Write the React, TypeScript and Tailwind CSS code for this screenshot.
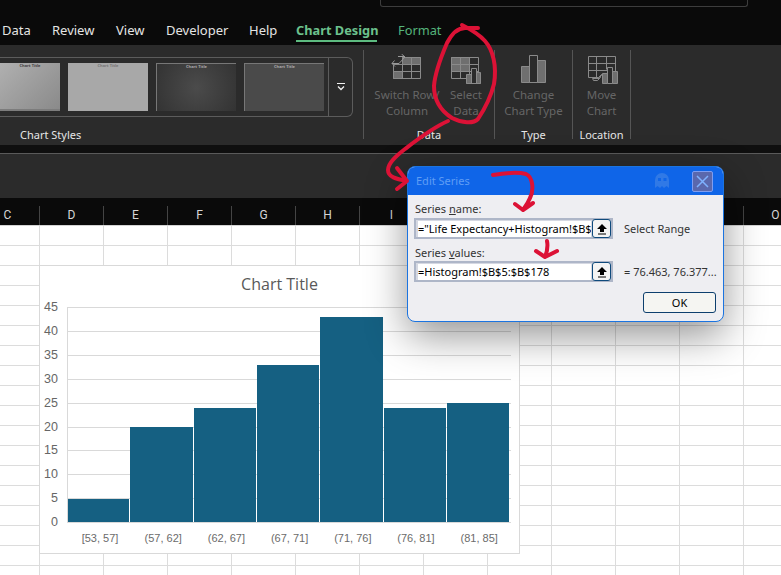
const UI = "font-['Noto_Sans','Open_Sans',sans-serif]";

const bars = [
  { x: 29, w: 61, top: 234 },
  { x: 91, w: 63, top: 162 },
  { x: 155, w: 62, top: 143 },
  { x: 218, w: 62, top: 100 },
  { x: 281, w: 63, top: 52 },
  { x: 345, w: 62, top: 143 },
  { x: 408, w: 62, top: 138 },
];
const ticks = [45, 40, 35, 30, 25, 20, 15, 10, 5, 0];
const tickY = [42, 66, 90, 114, 138, 162, 185, 209, 233, 257];
const cats = ["[53, 57]", "(57, 62]", "(62, 67]", "(67, 71]", "(71, 76]", "(76, 81]", "(81, 85]"];
const headers = ["C", "D", "E", "F", "G", "H", "I", "J", "K", "L", "M", "N", "O"];

function SwitchIcon() {
  return (
    <svg width="32" height="32" viewBox="0 0 32 32" fill="none" stroke="#8a8a8a" strokeWidth="1">
      <path d="M11.5 3.5h9v7h-9zM2.5 17.5h9v7h-9z" fill="#6f6f6f" />
      <path d="M20.5 3.5h9v7h-9z" fill="#6f6f6f" />
      <path d="M2.5 10.5h27v14h-27zM11.5 3.5v21M20.5 3.5v21M2.5 17.5h27M11.5 3.5h18v7" />
      <path d="M7 2.5h6.5M10.5 0l3.5 3-6 6.5H1M3.500 6.500 1 9.500l3 3" stroke="#9a9a9a" fill="none" />
    </svg>
  );
}
function SelectIcon() {
  return (
    <svg width="32" height="32" viewBox="0 0 32 32" fill="none" stroke="#8a8a8a" strokeWidth="1">
      <path d="M1.500 3.500h18v14h-18z" fill="#6f6f6f" />
      <path d="M1.500 3.500h27v21h-27zM10.500 3.500v21M19.500 3.500v21M1.500 10.500h27M1.500 17.500h27" />
      <path d="M16.500 20.500h5v9h-5zM26.500 18.500h4v11h-4z" fill="#6f6f6f" />
      <path d="M21.500 14.500h5v15h-5z" fill="#2b2b2b" />
      <path d="M16.500 29.500h14" />
    </svg>
  );
}
function TypeIcon() {
  return (
    <svg width="32" height="32" viewBox="0 0 32 32" fill="none" stroke="#8a8a8a" strokeWidth="1">
      <path d="M3.500 12.500h8v16h-8zM19.500 6.500h8v22h-8z" fill="#6f6f6f" />
      <path d="M11.500 1.500h8v27h-8z" />
    </svg>
  );
}
function MoveIcon() {
  return (
    <svg width="32" height="32" viewBox="0 0 32 32" fill="none" stroke="#8a8a8a" strokeWidth="1">
      <path d="M2.500 2.500h27v16M2.500 2.500v21h10l3-3M10.500 2.500v21M20.500 2.500v13M2.500 9.500h27M2.500 16.500h22M12.500 23.500l-1 1.500" />
      <path d="M6.500 24.500h7l2-4-2 4-2 2h-4z" fill="#2b2b2b" />
      <path d="M16.500 19.500h5v10h-5zM26.500 17.500h5v12h-5z" fill="#6f6f6f" />
      <path d="M21.500 13.500h5v16h-5z" fill="#2b2b2b" />
    </svg>
  );
}

function RibbonButton({ icon, lines }: { icon: React.ReactNode; lines: string[] }) {
  return (
    <div className="flex flex-col items-center">
      {icon}
      <div className="mt-[1px] text-center text-[11.5px] leading-[16px] text-[#666666] whitespace-nowrap">
        {lines.map((l) => (
          <div key={l}>{l}</div>
        ))}
      </div>
    </div>
  );
}

function GroupLabel({ children }: { children: React.ReactNode }) {
  return <div className="text-[11px] leading-[16px] text-[#e6e6e6] text-center whitespace-nowrap">{children}</div>;
}

function Sep() {
  return <div className="w-px h-[89px] bg-[#555555] shrink-0" />;
}

function Thumb({ className, title, tc }: { className: string; title: string; tc: string }) {
  return (
    <div className={`h-[48px] shrink-0 text-center text-[4px] leading-[6px] font-bold ${className} ${tc}`}>{title}</div>
  );
}

function RefRow({ value, side }: { value: string; side: string }) {
  return (
    <div className="flex items-center h-[21px]">
      <div className="w-[199px] h-full border-2 border-[#aeb6c8] bg-[#d5d8e2] flex items-center shrink-0">
        <div className="w-[174px] h-[16px] ml-[2px] bg-white overflow-hidden whitespace-nowrap text-[11px] leading-[16px] text-black">
          {value}
        </div>
        <div className="ml-[1px] w-[19px] h-[19px] rounded-[3px] border border-[#0f4a7c] bg-[#f4f4f4] flex items-center justify-center">
          <svg width="12" height="12" viewBox="0 0 12 12">
            <path d="M6 1 11 6H8v3H4V6H1z" fill="#000" />
            <path d="M2 11h8" stroke="#000" strokeWidth="1" />
          </svg>
        </div>
      </div>
      <div className="ml-[11px] pt-[1px] text-[11px] text-[#333333] whitespace-nowrap">{side}</div>
    </div>
  );
}

export default function App() {
  return (
    <div className={`relative w-[781px] h-[575px] overflow-hidden bg-white flex flex-col ${UI}`}>
      {/* top bar */}
      <div className="h-[45px] bg-[#0a0a0a] shrink-0">
        <div className="ml-[380px] w-[368px] h-[7px] border border-t-0 border-[#3d3d3d] rounded-b-[3px]" />
        <div className="flex pl-[2px] pt-[14px] text-[13px] leading-[18px] text-[#e4e4e4]">
          <div className="w-[50px]">Data</div>
          <div className="w-[64px]">Review</div>
          <div className="w-[50px]">View</div>
          <div className="w-[83px]">Developer</div>
          <div className="w-[47px]">Help</div>
          <div className="w-[102px]">
            <div className="w-[81px] h-[21px] border-b-2 border-[#5dbb80] font-bold text-[12.800px] text-[#6cc18d] whitespace-nowrap">Chart Design</div>
          </div>
          <div className="text-[12.800px] text-[#55b57c]">Format</div>
        </div>
      </div>

      {/* ribbon */}
      <div className="h-[100px] shrink-0 bg-[#2b2b2b] flex pt-[5px] overflow-hidden">
        <div className="w-[363px] shrink-0 flex flex-col">
          <div className="mt-[7px] w-[353px] h-[60px] border border-l-0 border-[#5c5c5c] rounded-r-[6px] flex">
            <div className="w-[328px] flex items-center gap-[8px] overflow-hidden">
              <Thumb className="w-[60px] bg-[linear-gradient(135deg,#b0b0b0,#8a8a8a)] border-b-2 border-[#7c7c7c]" title="Chart Title" tc="text-[#444444]" />
              <Thumb className="w-[80px] bg-[#a8a8a8]" title="Chart Title" tc="text-[#777777]" />
              <Thumb className="w-[80px] bg-[radial-gradient(circle,#4b4b4b,#333333)] border-t border-l border-[#777777]" title="Chart Title" tc="text-[#aaaaaa]" />
              <Thumb className="w-[80px] bg-[#4a4a4a] border-t border-l border-[#777777]" title="Chart Title" tc="text-[#aaaaaa]" />
            </div>
            <div className="flex-1 border-l border-[#5c5c5c] flex items-center justify-center">
              <svg width="8" height="8" viewBox="0 0 8 8">
                <path d="M0 .5h8" stroke="#f0f0f0" strokeWidth="1" />
                <path d="M1 3.500l3 3 3-3" stroke="#f0f0f0" strokeWidth="1.300" fill="none" />
              </svg>
            </div>
          </div>
          <div className="ml-[20px] mt-[10px] w-[60px]">
            <GroupLabel>Chart Styles</GroupLabel>
          </div>
        </div>
        <Sep />
        <div className="w-[130px] shrink-0 flex flex-col">
          <div className="h-[77px] pt-[4px] flex">
            <div className="w-[86px] flex justify-center">
              <RibbonButton icon={<SwitchIcon />} lines={["Switch Row/", "Column"]} />
            </div>
            <div className="w-[32px] flex justify-center">
              <RibbonButton icon={<SelectIcon />} lines={["Select", "Data"]} />
            </div>
          </div>
          <GroupLabel>Data</GroupLabel>
        </div>
        <Sep />
        <div className="w-[77px] shrink-0 flex flex-col">
          <div className="h-[77px] pt-[4px] flex justify-center">
            <RibbonButton icon={<TypeIcon />} lines={["Change", "Chart Type"]} />
          </div>
          <GroupLabel>Type</GroupLabel>
        </div>
        <Sep />
        <div className="w-[57px] shrink-0 flex flex-col">
          <div className="h-[77px] pt-[4px] flex justify-center">
            <RibbonButton icon={<MoveIcon />} lines={["Move", "Chart"]} />
          </div>
          <GroupLabel>Location</GroupLabel>
        </div>
        <Sep />
      </div>

      {/* formula bar */}
      <div className="h-[8px] shrink-0 bg-[#0f0f0f]" />
      <div className="h-[46px] shrink-0 bg-[#2b2b2b] border-y border-[#5a5a5a]" />

      {/* column headers */}
      <div className="h-[27px] shrink-0 -mt-px bg-[#0a0a0a] flex items-end -ml-[24px] w-[900px]">
        {headers.map((h) => (
          <div key={h} className="w-[64px] h-[19px] shrink-0 border-r border-[#444444] text-center text-[12px] leading-[19px] text-[#d6d6d6] font-['Roboto',sans-serif]">
            {h}
          </div>
        ))}
      </div>
      <div className="h-px shrink-0 bg-[#d4d4d4]" />

      {/* sheet */}
      <div className="flex-1 flex flex-col -ml-[24px] w-[900px]">
        {Array.from({ length: 18 }).map((_, r) => (
          <div key={r} className="flex h-[20px] shrink-0 border-b border-[#dcdcdc]">
            {headers.map((h) => (
              <div key={h} className="w-[64px] shrink-0 border-r border-[#dcdcdc]" />
            ))}
          </div>
        ))}
      </div>

      {/* floating chart */}
      <div className="absolute left-[39px] top-[265px] w-[481px] h-[289px] bg-white border border-[#d9d9d9] font-['Liberation_Sans',sans-serif]">
        <div className="pt-[8px] text-center text-[16px] leading-[20px] text-[#595959] font-['Open_Sans',sans-serif]">Chart Title</div>
        <svg className="absolute left-0 top-0" width="479" height="287" viewBox="0 0 479 287">
          <g transform="translate(1 1)">
            {tickY.map((y) => (
              <line key={y} x1="26" x2="470" y1={y - 2 + 0.5} y2={y - 2 + 0.5} stroke="#d9d9d9" />
            ))}
            <line x1="26.500" x2="26.500" y1="40" y2="256" stroke="#d9d9d9" />
            {bars.map((b) => (
              <rect key={b.x} x={b.x - 2} y={b.top - 2} width={b.w} height={257 - b.top} fill="#156082" />
            ))}
            {ticks.map((t, i) => (
              <text key={t} x="17" y={tickY[i] + 2} textAnchor="end" fontSize="12.500" fill="#666666">
                {t}
              </text>
            ))}
            {cats.map((c, i) => (
              <text key={c} x={59 + i * 63.2} y="275" textAnchor="middle" fontSize="11" fill="#6b6b6b">
                {c}
              </text>
            ))}
          </g>
        </svg>
      </div>

      {/* dialog */}
      <div className="absolute left-[407px] top-[166px] w-[317px] h-[156px] rounded-[8px] border border-[#1b74e0] bg-[#eeeef2] overflow-hidden shadow-[0_14px_40px_rgba(0,0,0,0.42)]">
        <div className="h-[28px] bg-[#0f65e8] flex items-center pl-[8px] pr-[10px]">
          <div className="text-[11px] text-[#5f9df5]">Edit Series</div>
          <svg className="ml-auto" width="16" height="16" viewBox="0 0 16 16">
            <path d="M1 15V7a7 7 0 0 1 14 0v8l-2.500-2-2.500 2-2-2-2 2-2.500-2z" fill="#3079e6" />
            <rect x="4" y="5" width="3" height="3" fill="#0f65e8" />
            <rect x="9.500" y="5" width="3" height="3" fill="#0f65e8" />
          </svg>
          <div className="ml-[22px] w-[21px] h-[21px] rounded-[2px] border border-[#7f9df0] bg-[#5a68ad] flex items-center justify-center">
            <svg width="13" height="13" viewBox="0 0 13 13">
              <path d="M1 1l11 11M12 1 1 12" stroke="#7fb2ff" strokeWidth="1.500" />
            </svg>
          </div>
        </div>
        <div className="px-[6px] pt-[5px]">
          <div className="text-[11px] leading-[17px] text-[#333333] pl-[1px]">
            Series <u>n</u>ame:
          </div>
          <div className="mt-[1px]">
            <RefRow value={'="Life Expectancy+Histogram!$B$'} side="Select Range" />
          </div>
          <div className="mt-[5px] text-[11px] leading-[17px] text-[#333333] pl-[1px]">
            Series <u>v</u>alues:
          </div>
          <RefRow value="=Histogram!$B$5:$B$178" side="= 76.463, 76.377..." />
          <div className="flex justify-end mt-[10px] pr-[1px]">
            <div className="w-[73px] h-[21px] rounded-[3px] border border-[#0d3f6e] bg-[#f5f5f2] text-center text-[11px] leading-[19px] text-black">
              OK
            </div>
          </div>
        </div>
      </div>

      {/* hand-drawn red annotations */}
      <svg className="absolute left-0 top-0 pointer-events-none" width="781" height="575" viewBox="0 0 781 575" fill="none" stroke="#dc1236" strokeWidth="4" strokeLinecap="round" strokeLinejoin="round">
        <path d="M478 28 L467 28 C459 27 452 33 447 43 C441 57 435 72 434 86 C434 100 441 111 452 118 C462 123 473 124 478 119 C484 110 490 100 494 84 C497 66 493 50 485 41 C478 33 470 29 462 25" />
        <path d="M448 121 C432 128 418 139 405 149 C396 156 388 163 388 170 C388 177 396 179 407 181 M397 168 L407 181 L397 189" />
        <path d="M493 175 C505 173 518 172 526 174 C533 177 534 190 530 198 C528 203 525 207 523 210 M515 204 L523 210 L533 203" />
        <path d="M547 241 C548 246 547 252 545 257 M536 251 L545 257 L557 251" />
      </svg>
    </div>
  );
}
